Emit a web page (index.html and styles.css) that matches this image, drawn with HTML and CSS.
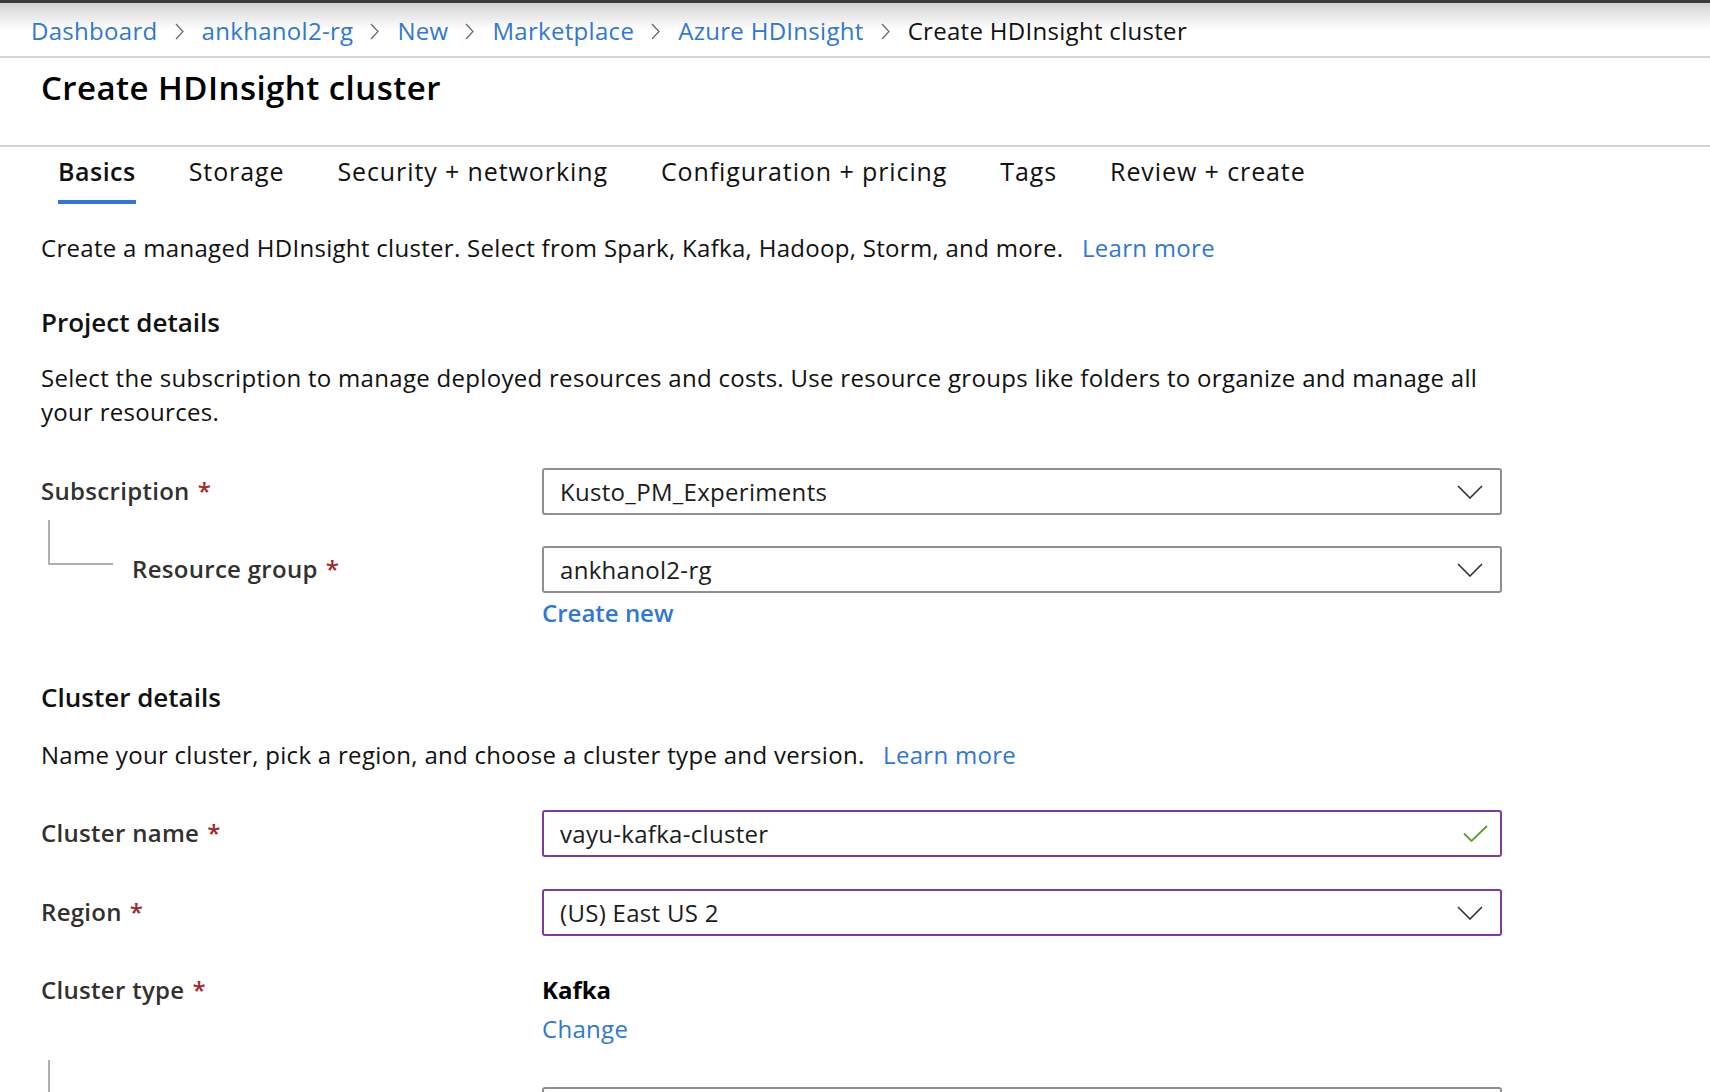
FILE: index.html
```html
<!DOCTYPE html>
<html lang="en">
<head>
<meta charset="utf-8">
<title>Create HDInsight cluster</title>
<link rel="stylesheet" href="styles.css">
</head>
<body>
<header class="crumbs">
  <a class="crumb-link">Dashboard</a>
  <svg class="sep" width="9" height="17" viewBox="0 0 9 17"><path d="M1 1 L8 8.5 L1 16" fill="none" stroke="#666" stroke-width="1.2"/></svg>
  <a class="crumb-link">ankhanol2-rg</a>
  <svg class="sep" width="9" height="17" viewBox="0 0 9 17"><path d="M1 1 L8 8.5 L1 16" fill="none" stroke="#666" stroke-width="1.2"/></svg>
  <a class="crumb-link">New</a>
  <svg class="sep" width="9" height="17" viewBox="0 0 9 17"><path d="M1 1 L8 8.5 L1 16" fill="none" stroke="#666" stroke-width="1.2"/></svg>
  <a class="crumb-link">Marketplace</a>
  <svg class="sep" width="9" height="17" viewBox="0 0 9 17"><path d="M1 1 L8 8.5 L1 16" fill="none" stroke="#666" stroke-width="1.2"/></svg>
  <a class="crumb-link">Azure HDInsight</a>
  <svg class="sep" width="9" height="17" viewBox="0 0 9 17"><path d="M1 1 L8 8.5 L1 16" fill="none" stroke="#666" stroke-width="1.2"/></svg>
  <span class="crumb-current">Create HDInsight cluster</span>
</header>

<div class="titlebar">
  <h1 class="page-title">Create HDInsight cluster</h1>
</div>

<nav class="tabs">
  <div class="tab active">Basics</div>
  <div class="tab">Storage</div>
  <div class="tab">Security + networking</div>
  <div class="tab">Configuration + pricing</div>
  <div class="tab">Tags</div>
  <div class="tab">Review + create</div>
</nav>

<main class="content">
  <p class="intro">Create a managed HDInsight cluster. Select from Spark, Kafka, Hadoop, Storm, and more. <a class="link learn">Learn more</a></p>

  <h2 class="section-title">Project details</h2>
  <p class="section-desc">Select the subscription to manage deployed resources and costs. Use resource groups like folders to organize and manage all your resources.</p>

  <div class="form-row row-sub">
    <div class="label-cell"><span class="label">Subscription</span><span class="req">*</span></div>
    <div class="field-cell">
      <div class="field-box">
        <span class="value">Kusto_PM_Experiments</span>
        <svg class="chev" width="26" height="14" viewBox="0 0 26 14"><path d="M1 1 L13 13 L25 1" fill="none" stroke="#323130" stroke-width="1.6"/></svg>
      </div>
    </div>
  </div>

  <div class="form-row row-rg">
    <div class="label-cell nested">
      <span class="tree"></span>
      <span class="label">Resource group</span><span class="req">*</span>
    </div>
    <div class="field-cell">
      <div class="field-box">
        <span class="value">ankhanol2-rg</span>
        <svg class="chev" width="26" height="14" viewBox="0 0 26 14"><path d="M1 1 L13 13 L25 1" fill="none" stroke="#323130" stroke-width="1.6"/></svg>
      </div>
      <a class="link create-new">Create new</a>
    </div>
  </div>

  <h2 class="section-title cluster-title">Cluster details</h2>
  <p class="section-desc cluster-desc">Name your cluster, pick a region, and choose a cluster type and version. <a class="link learn">Learn more</a></p>

  <div class="form-row row-name">
    <div class="label-cell"><span class="label">Cluster name</span><span class="req">*</span></div>
    <div class="field-cell">
      <div class="field-box focused">
        <span class="value">vayu-kafka-cluster</span>
        <svg class="check" width="25" height="17" viewBox="0 0 25 17"><path d="M1 8.5 L8.5 16 L24 1" fill="none" stroke="#5ba12e" stroke-width="1.8"/></svg>
      </div>
    </div>
  </div>

  <div class="form-row row-region">
    <div class="label-cell"><span class="label">Region</span><span class="req">*</span></div>
    <div class="field-cell">
      <div class="field-box focused">
        <span class="value">(US) East US 2</span>
        <svg class="chev" width="26" height="14" viewBox="0 0 26 14"><path d="M1 1 L13 13 L25 1" fill="none" stroke="#323130" stroke-width="1.6"/></svg>
      </div>
    </div>
  </div>

  <div class="form-row row-type">
    <div class="label-cell top"><span class="label">Cluster type</span><span class="req">*</span></div>
    <div class="field-cell">
      <div class="type-value">Kafka</div>
      <a class="link change">Change</a>
    </div>
  </div>

  <div class="form-row row-version">
    <div class="label-cell nested">
      <span class="tree tree-long"></span>
    </div>
    <div class="field-cell">
      <div class="field-box"></div>
    </div>
  </div>
</main>
</body>
</html>
```

FILE: styles.css
```css
html, body {
  margin: 0;
  padding: 0;
  height: 100%;
  overflow: hidden;
  background: #ffffff;
}

body {
  font-family: "Open Sans", "Noto Sans", "Liberation Sans", sans-serif;
  font-size: 24px;
  letter-spacing: 0.3px;
  color: #000000;
}

a {
  cursor: pointer;
}

/* ---------- breadcrumb ---------- */
.crumbs {
  height: 42px;
  padding: 14px 0 0 31px;
  display: flex;
  align-items: flex-start;
  border-bottom: 2px solid #d4d4d4;
  background: linear-gradient(to bottom, #3b3b3b 0, #3b3b3b 3px, #d4d4d4 3px, #ffffff 30px);
  line-height: 34px;
  white-space: nowrap;
}

.crumb-link {
  color: #2f78d3;
}

.crumb-current {
  color: #111111;
}

.sep {
  margin: 9px 18px 0 17px;
  flex: none;
}

/* ---------- title ---------- */
.titlebar {
  height: 87px;
  padding-left: 41px;
  border-bottom: 2px solid #d4d4d4;
}

.page-title {
  margin: 0;
  padding-top: 10px;
  font-size: 33px;
  font-weight: 600;
  letter-spacing: 0.45px;
  line-height: 40px;
  color: #000000;
}

/* ---------- tabs ---------- */
.tabs {
  display: flex;
  gap: 53px;
  padding-left: 58px;
}

.tab {
  padding: 8px 0 13px;
  font-size: 25px;
  letter-spacing: 0.9px;
  line-height: 32px;
  border-bottom: 4px solid transparent;
  color: #111111;
  white-space: nowrap;
}

.tab.active {
  font-weight: 600;
  letter-spacing: 0.5px;
  border-bottom-color: #2f78d3;
}

/* ---------- content ---------- */
.content {
  padding-left: 41px;
  line-height: 34px;
  color: #111111;
}

.intro {
  margin: 27px 0 0;
}

.link {
  color: #2f78d3;
}

.learn {
  margin-left: 12px;
}

.section-title {
  margin: 40px 0 0;
  font-size: 26px;
  font-weight: 600;
  letter-spacing: 0;
  line-height: 34px;
  color: #111111;
}

.cluster-title {
  margin-top: 50px;
}

.section-desc {
  margin: 22px 0 0;
  max-width: 1450px;
}

.section-desc.cluster-desc {
  margin-top: 24px;
}

/* ---------- form rows ---------- */
.form-row {
  display: grid;
  grid-template-columns: 501px 960px;
}

.row-sub { margin-top: 39px; }
.row-rg { margin-top: 31px; }
.row-name { margin-top: 38px; }
.row-region { margin-top: 32px; }
.row-type { margin-top: 37px; }
.row-version { margin-top: 41px; }

.label-cell {
  display: flex;
  align-items: flex-start;
  padding-top: 6px;
  white-space: nowrap;
}

.label-cell.top {
  padding-top: 0;
}

.label {
  font-weight: 600;
  color: #323130;
}

.req {
  margin-left: 8px;
  color: #a4262c;
  font-weight: 600;
}

.tree {
  flex: none;
  width: 63px;
  height: 43px;
  margin: -32px 19px 0 7px;
  border-left: 2px solid #b0b0b0;
  border-bottom: 2px solid #b0b0b0;
}

.tree-long {
  height: 80px;
  margin-top: -33px;
}

.field-cell {
  display: flex;
  flex-direction: column;
  align-items: flex-start;
}

.field-box {
  box-sizing: border-box;
  width: 960px;
  height: 47px;
  padding: 0 17px 0 16px;
  display: flex;
  align-items: center;
  justify-content: space-between;
  border: 2px solid #8f8f8f;
  border-radius: 3px;
  color: #1b1b1b;
}

.field-box.focused {
  border-color: #7f3a9e;
}

.check {
  margin-right: -5px;
}

.create-new {
  margin-top: 3px;
  font-weight: 600;
  letter-spacing: 0;
}

.type-value {
  font-weight: 700;
  letter-spacing: 0;
  color: #000000;
}

.change {
  margin-top: 5px;
}
```
